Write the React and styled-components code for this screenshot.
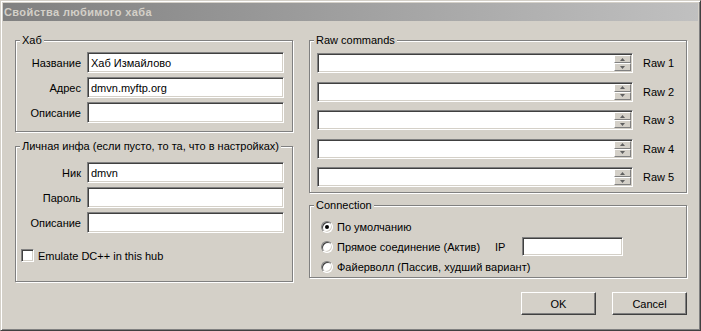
import React from 'react';
import styled, { createGlobalStyle } from 'styled-components';

const Global = createGlobalStyle`
  html, body { margin: 0; padding: 0; background: #d4d0c8; }
  body { font-family: "Liberation Sans", Arial, sans-serif; font-size: 11px; color: #000; }
  * { box-sizing: border-box; }
`;

const Window = styled.div`
  width: 701px;
  height: 331px;
  background: #d4d0c8;
  border: 1px solid;
  border-color: #d4d0c8 #404040 #404040 #d4d0c8;
  box-shadow: inset 1px 1px 0 #fff, inset -1px -1px 0 #808080;
  padding: 2px;
  display: flex;
  flex-direction: column;
`;

const TitleBar = styled.div`
  height: 18px;
  flex: none;
  display: flex;
  align-items: center;
  padding-left: 1px;
  background: linear-gradient(to right, #808080, #c0c0c0);
  color: #d4d0c8;
  font-weight: bold;
  font-size: 11px;
  letter-spacing: 0.4px;
  white-space: nowrap;
`;

const Body = styled.div`
  display: flex;
  gap: 16px;
  padding: 19px 11px 0 12px;
`;

const Column = styled.div`
  width: ${p => p.$w}px;
  flex: none;
  display: flex;
  flex-direction: column;
`;

const Group = styled.div`
  position: relative;
  margin-top: ${p => p.$mt || 0}px;
  padding: ${p => p.$pad};
  border: 1px solid #808080;
  box-shadow: inset 1px 1px 0 #fff, 1px 1px 0 #fff;
  display: flex;
  flex-direction: column;
  gap: ${p => p.$gap || 0}px;
`;

const Caption = styled.span`
  position: absolute;
  top: -7px;
  left: 4px;
  padding: 0 2px;
  line-height: 13px;
  background: #d4d0c8;
  white-space: nowrap;
`;

const FieldRow = styled.div`
  display: flex;
  align-items: center;
  height: 21px;
`;

const FieldLabel = styled.span`
  width: 65px;
  margin-right: 6px;
  text-align: right;
  white-space: nowrap;
`;

const sunken = `
  border: 1px solid;
  border-color: #808080 #fff #fff #808080;
  box-shadow: inset 1px 1px 0 #404040, inset -1px -1px 0 #d4d0c8;
  background: #fff;
`;

const TextBox = styled.input`
  ${sunken}
  width: ${p => p.$w || 197}px;
  height: ${p => p.$h || 21}px;
  padding: 0 3px;
  font: inherit;
  color: #000;
  outline: none;
`;

const CheckRow = styled.label`
  display: flex;
  align-items: center;
  gap: 4px;
  margin: 12px 0 0 5px;
  height: 13px;
`;

const CheckBox = styled.span`
  ${sunken}
  width: 13px;
  height: 13px;
  flex: none;
`;

const RawRow = styled.div`
  display: flex;
  align-items: center;
  gap: 10px;
  height: 20px;
  padding-left: 7px;
`;

const RawBox = styled.div`
  ${sunken}
  width: 316px;
  height: 20px;
  padding: 1px;
  display: flex;
`;

const RawInput = styled.input`
  flex: 1;
  min-width: 0;
  border: 0;
  background: transparent;
  font: inherit;
  outline: none;
  padding: 0 2px;
`;

const Spinner = styled.div`
  width: 17px;
  display: flex;
  flex-direction: column;
`;

const SpinBtn = styled.div`
  flex: 1;
  background: #d4d0c8;
  border: 1px solid;
  border-color: #fff #808080 #808080 #fff;
  display: flex;
  align-items: center;
  justify-content: center;
`;

const RadioRow = styled.label`
  display: flex;
  align-items: center;
  height: ${p => p.$h || 17}px;
  margin-top: ${p => p.$mt || 0}px;
  padding-left: 11px;
  white-space: nowrap;
`;

const Radio = styled.span`
  width: 12px;
  height: 12px;
  flex: none;
  border-radius: 50%;
  border: 1px solid;
  border-color: #808080 #fff #fff #808080;
  box-shadow: inset 1px 1px 0 #404040, inset -1px -1px 0 #d4d0c8;
  background: #fff;
  margin-right: 4px;
  display: flex;
  align-items: center;
  justify-content: center;
  &::after {
    content: '';
    display: ${p => (p.$checked ? 'block' : 'none')};
    width: 4px;
    height: 4px;
    border-radius: 50%;
    background: #000;
  }
`;

const RadioText = styled.span`
  width: ${p => (p.$w ? `${p.$w}px` : 'auto')};
`;

const IpLabel = styled.span`
  width: 27px;
`;

const Buttons = styled.div`
  display: flex;
  justify-content: flex-end;
  gap: 16px;
  margin-top: 14px;
`;

const Button = styled.button`
  width: 75px;
  height: 23px;
  background: #d4d0c8;
  border: 1px solid;
  border-color: #fff #404040 #404040 #fff;
  box-shadow: inset -1px -1px 0 #808080;
  font: inherit;
  color: #000;
  padding: 0;
`;

const Arrow = ({ up }) => (
  <svg width="5" height="3" viewBox="0 0 5 3">
    <path d={up ? 'M2.5 0 L5 3 L0 3 Z' : 'M0 0 L5 0 L2.5 3 Z'} fill="#606060" />
  </svg>
);

const Field = ({ label, value }) => (
  <FieldRow>
    <FieldLabel>{label}</FieldLabel>
    <TextBox defaultValue={value} readOnly />
  </FieldRow>
);

const RawField = ({ n }) => (
  <RawRow>
    <RawBox>
      <RawInput readOnly />
      <Spinner>
        <SpinBtn><Arrow up /></SpinBtn>
        <SpinBtn><Arrow /></SpinBtn>
      </Spinner>
    </RawBox>
    <span>Raw {n}</span>
  </RawRow>
);

export default function App() {
  return (
    <>
      <Global />
      <Window>
        <TitleBar>Свойства любимого хаба</TitleBar>
        <Body>
          <Column $w={278}>
            <Group $pad="11px 0 8px 0" $gap={4}>
              <Caption>Хаб</Caption>
              <Field label="Название" value="Хаб Измайлово" />
              <Field label="Адрес" value="dmvn.myftp.org" />
              <Field label="Описание" value="" />
            </Group>
            <Group $mt={14} $pad="15px 0 19px 0" $gap={4}>
              <Caption>Личная инфа (если пусто, то та, что в настройках)</Caption>
              <Field label="Ник" value="dmvn" />
              <Field label="Пароль" value="" />
              <Field label="Описание" value="" />
              <CheckRow>
                <CheckBox />
                <span>Emulate DC++ in this hub</span>
              </CheckRow>
            </Group>
          </Column>
          <Column $w={378}>
            <Group $pad="12px 0 5px 0" $gap={8.5}>
              <Caption>Raw commands</Caption>
              {[1, 2, 3, 4, 5].map(n => <RawField key={n} n={n} />)}
            </Group>
            <Group $mt={12} $pad="12px 0 2px 0">
              <Caption>Connection</Caption>
              <RadioRow $h={18}>
                <Radio $checked />
                <RadioText>По умолчанию</RadioText>
              </RadioRow>
              <RadioRow $h={21}>
                <Radio />
                <RadioText $w={158}>Прямое соединение (Актив)</RadioText>
                <IpLabel>IP</IpLabel>
                <TextBox $w={101} $h={19} readOnly />
              </RadioRow>
              <RadioRow $mt={1}>
                <Radio />
                <RadioText>Файерволл (Пассив, худший вариант)</RadioText>
              </RadioRow>
            </Group>
            <Buttons>
              <Button>OK</Button>
              <Button>Cancel</Button>
            </Buttons>
          </Column>
        </Body>
      </Window>
    </>
  );
}
